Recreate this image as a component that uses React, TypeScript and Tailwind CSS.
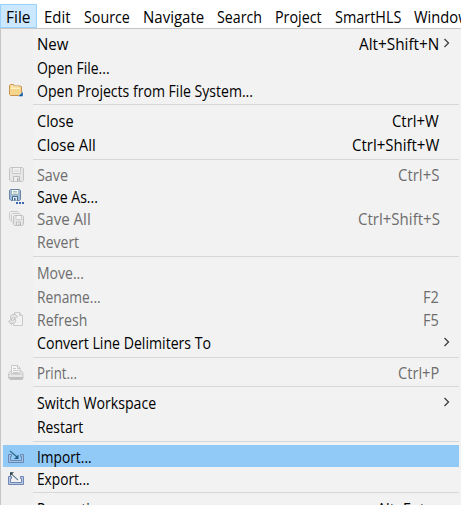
import { useLayoutEffect, useRef, useState } from "react";
import type { ReactNode } from "react";

/* Text condensed or stretched horizontally to an exact width. */
function FitText({ text, width }: { text: string; width: number }) {
  const ref = useRef<HTMLSpanElement>(null);
  const [scale, setScale] = useState(0.93);
  useLayoutEffect(() => {
    if (ref.current) setScale(width / ref.current.offsetWidth);
  }, [text, width]);
  return (
    <span className="block shrink-0 pt-[2px]" style={{ width }}>
      <span ref={ref} className="inline-block origin-left whitespace-nowrap" style={{ transform: `scaleX(${scale})` }}>
        {text}
      </span>
    </span>
  );
}

function Icon({ children }: { children: ReactNode }) {
  return (
    <svg width="16" height="16" viewBox="0 0 16 16" fill="none">
      {children}
    </svg>
  );
}

const FolderIcon = () => (
  <Icon>
    <path d="M1.5 12.5v-9l1-1h3l1 1.5h6l1 1v7.5l-1 1h-10z" fill="#f5d58c" stroke="#c89248" />
    <path d="M2.5 6.5h9.5M3 5h8.500" stroke="#fff0c4" />
    <path d="M3 3.500h2" stroke="#fbe7b5" />
    <path d="M15 9.500v5h-5z" fill="#1460a8" stroke="#fff" strokeWidth=".4" />
  </Icon>
);

const SaveIcon = () => (
  <Icon>
    <path d="M1.500 2.500l1-1h12l1 1v12l-1 1H3l-1.500-1.500z" fill="#e6e6e6" stroke="#c4c4c4" />
    <path d="M4.500 2v5.500h8V2" fill="#f3f3f3" stroke="#cacaca" />
    <path d="M6 4h5M6 5.700h5" stroke="#dadada" />
    <path d="M5.500 15v-4.500h6V15" fill="#eee" stroke="#bcbcbc" />
    <path d="M9 12h1.500v3H9z" fill="#bababa" />
  </Icon>
);

const SaveAsIcon = () => (
  <Icon>
    <path d="M1.500 2.500l1-1h9l1 1v9l-1 1H3l-1.500-1.500z" fill="#9ebbd8" stroke="#6785a8" />
    <path d="M3.500 2v4.500h7V2" fill="#f3f7ef" stroke="#a0b5bd" />
    <path d="M5 3.500h4M5 5h4" stroke="#aac0c5" />
    <path d="M4.500 12.500V8.500h5v4" fill="#e4edf7" stroke="#49698f" />
    <path d="M6 10h1.500v2.500H6z" fill="#3e6393" />
    <path d="M8 14h2v2H8zM11 14h2v2h-2zM14 14h2v2h-2z" fill="#3c66b0" />
  </Icon>
);

const SaveAllIcon = () => (
  <Icon>
    <path d="M1.500 2.500l1-1h7l1 1v8h-8l-1-1z" fill="#eee" stroke="#cacaca" />
    <path d="M3.500 4.500l1-1h7l1 1v8h-8l-1-1z" fill="#eee" stroke="#cacaca" />
    <path d="M5.500 6.500l1-1h8l1 1v8l-1 1h-8l-1-1z" fill="#e5e5e5" stroke="#c2c2c2" />
    <path d="M8 6v3.500h5.500V6" fill="#f4f4f4" stroke="#cdcdcd" />
    <path d="M8.500 15v-3h4v3" fill="#f2f2f2" stroke="#bdbdbd" />
    <path d="M10 13.500h1.500V15H10z" fill="#bababa" />
  </Icon>
);

const RefreshIcon = () => (
  <Icon>
    <path d="M6.500 3.500v-2h5l3 3v10h-9v-2" fill="#f2f2f2" stroke="#cacaca" />
    <path d="M11.500 1.500v3h3" fill="#ddd" stroke="#cacaca" />
    <path d="M2.500 7.500c-1-3 2-5 4-3.500V2.500l3 3-3 2.500V6.500c-1-1-2 0-2 1zM7.500 8.500c1 3-2 5-4 3.500v1.500l-3-3 3-2.500v1.500c1 1 2 0 2-1z" fill="#e5e5e5" stroke="#c0c0c0" strokeWidth=".9" />
  </Icon>
);

const PrintIcon = () => (
  <Icon>
    <path d="M1 9l2-2.500h10L15 9v5l-1 1.500H2L.500 14V9.500z" fill="#e7e7e7" stroke="#c6c6c6" />
    <path d="M3.500 9.500v-8h6l2.500 2.500v5.500z" fill="#f6f6f6" stroke="#c8c8c8" />
    <path d="M9.500 2v2.500H12M5 4.500h3M5 6.500h5.500M5 8.500h5.500" stroke="#c8c8c8" />
    <path d="M1 10.500h14" stroke="#d4d4d4" />
    <path d="M1 13h14v2.500H2z" fill="#bfbfbf" />
  </Icon>
);

const tray = "M.500 6.500h3v2h-1v4h11v-4h-1v-2h3v8H.500z";

const ImportIcon = () => (
  <Icon>
    <path d={tray} fill="#a5c2e5" stroke="#6889b5" />
    <path d="M2 3l7 6" stroke="#316b8d" strokeWidth="1.200" />
    <path d="M10.500 6.500v4.500H6z" fill="#235c80" />
  </Icon>
);

const ExportIcon = () => (
  <Icon>
    <path d={tray} fill="#b7c8e5" stroke="#7188b5" />
    <path d="M3 3.500l7 6.500" stroke="#fff" strokeWidth="2.500" />
    <path d="M3 3.500l7 6.500" stroke="#607d89" strokeWidth="1.100" />
    <path d="M2 2.300h4L2 6.300z" fill="#2b424b" />
  </Icon>
);

type Item = {
  label: string;
  w: number;
  keys?: string;
  kw?: number;
  icon?: ReactNode;
  disabled?: boolean;
  sub?: boolean;
  active?: boolean;
};

const groups: Item[][] = [
  [
    { label: "New", w: 31, keys: "Alt+Shift+N", kw: 80, sub: true },
    { label: "Open File...", w: 73 },
    { label: "Open Projects from File System...", w: 216, icon: <FolderIcon /> },
  ],
  [
    { label: "Close", w: 36.5, keys: "Ctrl+W", kw: 47 },
    { label: "Close All", w: 59, keys: "Ctrl+Shift+W", kw: 87 },
  ],
  [
    { label: "Save", w: 31.5, keys: "Ctrl+S", kw: 41.5, icon: <SaveIcon />, disabled: true },
    { label: "Save As...", w: 61, icon: <SaveAsIcon /> },
    { label: "Save All", w: 53.5, keys: "Ctrl+Shift+S", kw: 81.5, icon: <SaveAllIcon />, disabled: true },
    { label: "Revert", w: 42.5, disabled: true },
  ],
  [
    { label: "Move...", w: 47, disabled: true },
    { label: "Rename...", w: 64, keys: "F2", kw: 16, disabled: true },
    { label: "Refresh", w: 50, keys: "F5", kw: 16, icon: <RefreshIcon />, disabled: true },
    { label: "Convert Line Delimiters To", w: 174, sub: true },
  ],
  [{ label: "Print...", w: 40, keys: "Ctrl+P", kw: 41.5, icon: <PrintIcon />, disabled: true }],
  [
    { label: "Switch Workspace", w: 119.5, sub: true },
    { label: "Restart", w: 46.5 },
  ],
  [
    { label: "Import...", w: 55, icon: <ImportIcon />, active: true },
    { label: "Export...", w: 53, icon: <ExportIcon /> },
  ],
  [{ label: "Properties", w: 67, keys: "Alt+Enter", kw: 62 }],
];

const menus = [
  { label: "Edit", w: 27 },
  { label: "Source", w: 46 },
  { label: "Navigate", w: 61 },
  { label: "Search", w: 45 },
  { label: "Project", w: 47 },
  { label: "SmartHLS", w: 66 },
  { label: "Window", w: 56 },
];

function Row({ item }: { item: Item }) {
  return (
    <div
      className={`mr-[2px] ml-[2px] flex shrink-0 items-center ${item.icon ? "h-[22px]" : "h-6"} ${
        item.active ? "bg-[#91c9f7]" : ""
      } ${item.disabled ? "text-[#6d6d6d]" : "text-black"}`}
    >
      <div className="w-[34px] shrink-0 pl-[5px]">{item.icon}</div>
      <FitText text={item.label} width={item.w} />
      <div className="ml-auto flex items-center">
        {item.keys && <FitText text={item.keys} width={item.kw ?? 0} />}
        <div className="flex w-5 justify-start pl-1">
          {item.sub && (
            <svg width="8" height="10" viewBox="0 0 8 10" fill="none">
              <path d="M1.500 1l4 4-4 4" stroke="#404040" strokeWidth="1.300" />
            </svg>
          )}
        </div>
      </div>
    </div>
  );
}

export default function App() {
  return (
    <div className="flex h-[505px] w-[461px] flex-col overflow-hidden bg-white font-['Open_Sans','Noto_Sans',sans-serif] text-[15.5px] leading-[22px] text-black">
      <div className="flex h-7 shrink-0 items-start overflow-hidden pt-1">
        <div className="flex h-[24px] w-[37px] shrink-0 items-center border border-[#99d1ff] bg-[#cce8ff] pl-[5px]">
          <FitText text="File" width={25} />
        </div>
        <div className="flex h-[24px] items-center gap-[13px] pl-[7px]">
          {menus.map((m) => (
            <FitText key={m.label} text={m.label} width={m.w} />
          ))}
        </div>
      </div>
      <div className="flex min-h-0 flex-1 flex-col overflow-hidden border-t border-l border-[#c6c6c6] bg-[linear-gradient(90deg,#f0f0f0_32px,#f2f2f2_32px)] pt-[2px]">
        {groups.map((group, i) => (
          <div key={i} className="shrink-0">
            {i > 0 && <div className="mt-[3px] mr-[2px] mb-[3px] ml-8 h-px bg-[#d7d7d7]" />}
            {group.map((item) => (
              <Row key={item.label} item={item} />
            ))}
          </div>
        ))}
      </div>
    </div>
  );
}
